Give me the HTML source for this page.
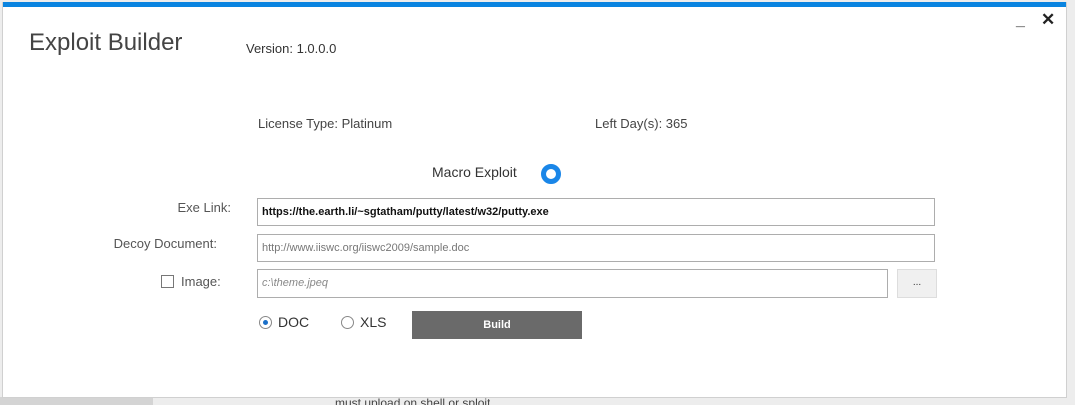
<!DOCTYPE html>
<html><head><meta charset="utf-8"><style>
*{margin:0;padding:0;box-sizing:border-box}
body{width:1075px;height:405px;background:#ededed;position:relative;overflow:hidden;font-family:"Liberation Sans",sans-serif;color:#333}
.strip{position:absolute;left:0;top:397px;width:153px;height:8px;background:#d4d4d4}
.win{position:absolute;left:2px;top:2px;width:1065px;height:396px;background:#fff;border:1px solid #d0d0d0;border-top:none}
.bar{position:absolute;left:0;top:0;width:100%;height:5px;background:#0a84e0}
.a{position:absolute;white-space:nowrap}
.inp{position:absolute;border:1px solid #adadad;background:#fff;font-size:11px;padding-left:4px;line-height:26px}
.lbl{position:absolute;font-size:13px;color:#555;text-align:right;width:200px}
</style></head><body>
<div class="strip"></div>
<div class="a" style="left:335px;top:396px;font-size:12px;color:#444;height:9px;overflow:hidden;line-height:14px">must upload on shell or sploit</div>
<div class="win">
<div class="bar"></div>
<div class="a" style="left:1013px;top:10px;font-size:16px;font-weight:bold;color:#222">_</div>
<div class="a" style="left:1038px;top:8px;font-size:17px;font-weight:bold;color:#222">✕</div>
<div class="a" style="left:26px;top:27px;font-size:24px;color:#444">Exploit Builder</div>
<div class="a" style="left:243px;top:39px;font-size:13px;color:#333">Version: 1.0.0.0</div>
<div class="a" style="left:255px;top:114px;font-size:13px;color:#444">License Type: Platinum</div>
<div class="a" style="left:592px;top:114px;font-size:13px;color:#444">Left Day(s): 365</div>
<div class="a" style="left:429px;top:162px;font-size:14px;color:#333">Macro Exploit</div>
<div class="a" style="left:538px;top:162px;width:20px;height:20px;border:5px solid #1a86e8;border-radius:50%"></div>
<div class="lbl" style="left:28px;top:198px">Exe Link:</div>
<div class="lbl" style="left:14px;top:234px">Decoy Document:</div>
<div class="a" style="left:158px;top:273px;width:13px;height:13px;border:1px solid #777"></div>
<div class="a" style="left:178px;top:272px;font-size:13px;color:#555">Image:</div>
<div class="inp" style="left:254px;top:196px;width:678px;height:28px;color:#111;font-weight:bold">https://the.earth.li/~sgtatham/putty/latest/w32/putty.exe</div>
<div class="inp" style="left:254px;top:232px;width:678px;height:28px;color:#777">http://www.iiswc.org/iiswc2009/sample.doc</div>
<div class="inp" style="left:254px;top:267px;width:631px;height:29px;color:#888;font-style:italic">c:\theme.jpeq</div>
<div class="a" style="left:894px;top:267px;width:40px;height:29px;background:#f0f0f0;border:1px solid #ddd;font-size:10px;text-align:center;line-height:26px;color:#333">...</div>
<div class="a" style="left:256px;top:314px;width:13px;height:13px;border:1px solid #888;border-radius:50%"><div style="position:absolute;left:3px;top:3px;width:5px;height:5px;border-radius:50%;background:#1a6fc8"></div></div>
<div class="a" style="left:275px;top:312px;font-size:14px;color:#333">DOC</div>
<div class="a" style="left:338px;top:314px;width:13px;height:13px;border:1px solid #888;border-radius:50%"></div>
<div class="a" style="left:357px;top:312px;font-size:14px;color:#333">XLS</div>
<div class="a" style="left:409px;top:309px;width:170px;height:28px;background:#6a6a6a;color:#fff;font-size:11px;font-weight:bold;text-align:center;line-height:28px">Build</div>
</div>
</body></html>
